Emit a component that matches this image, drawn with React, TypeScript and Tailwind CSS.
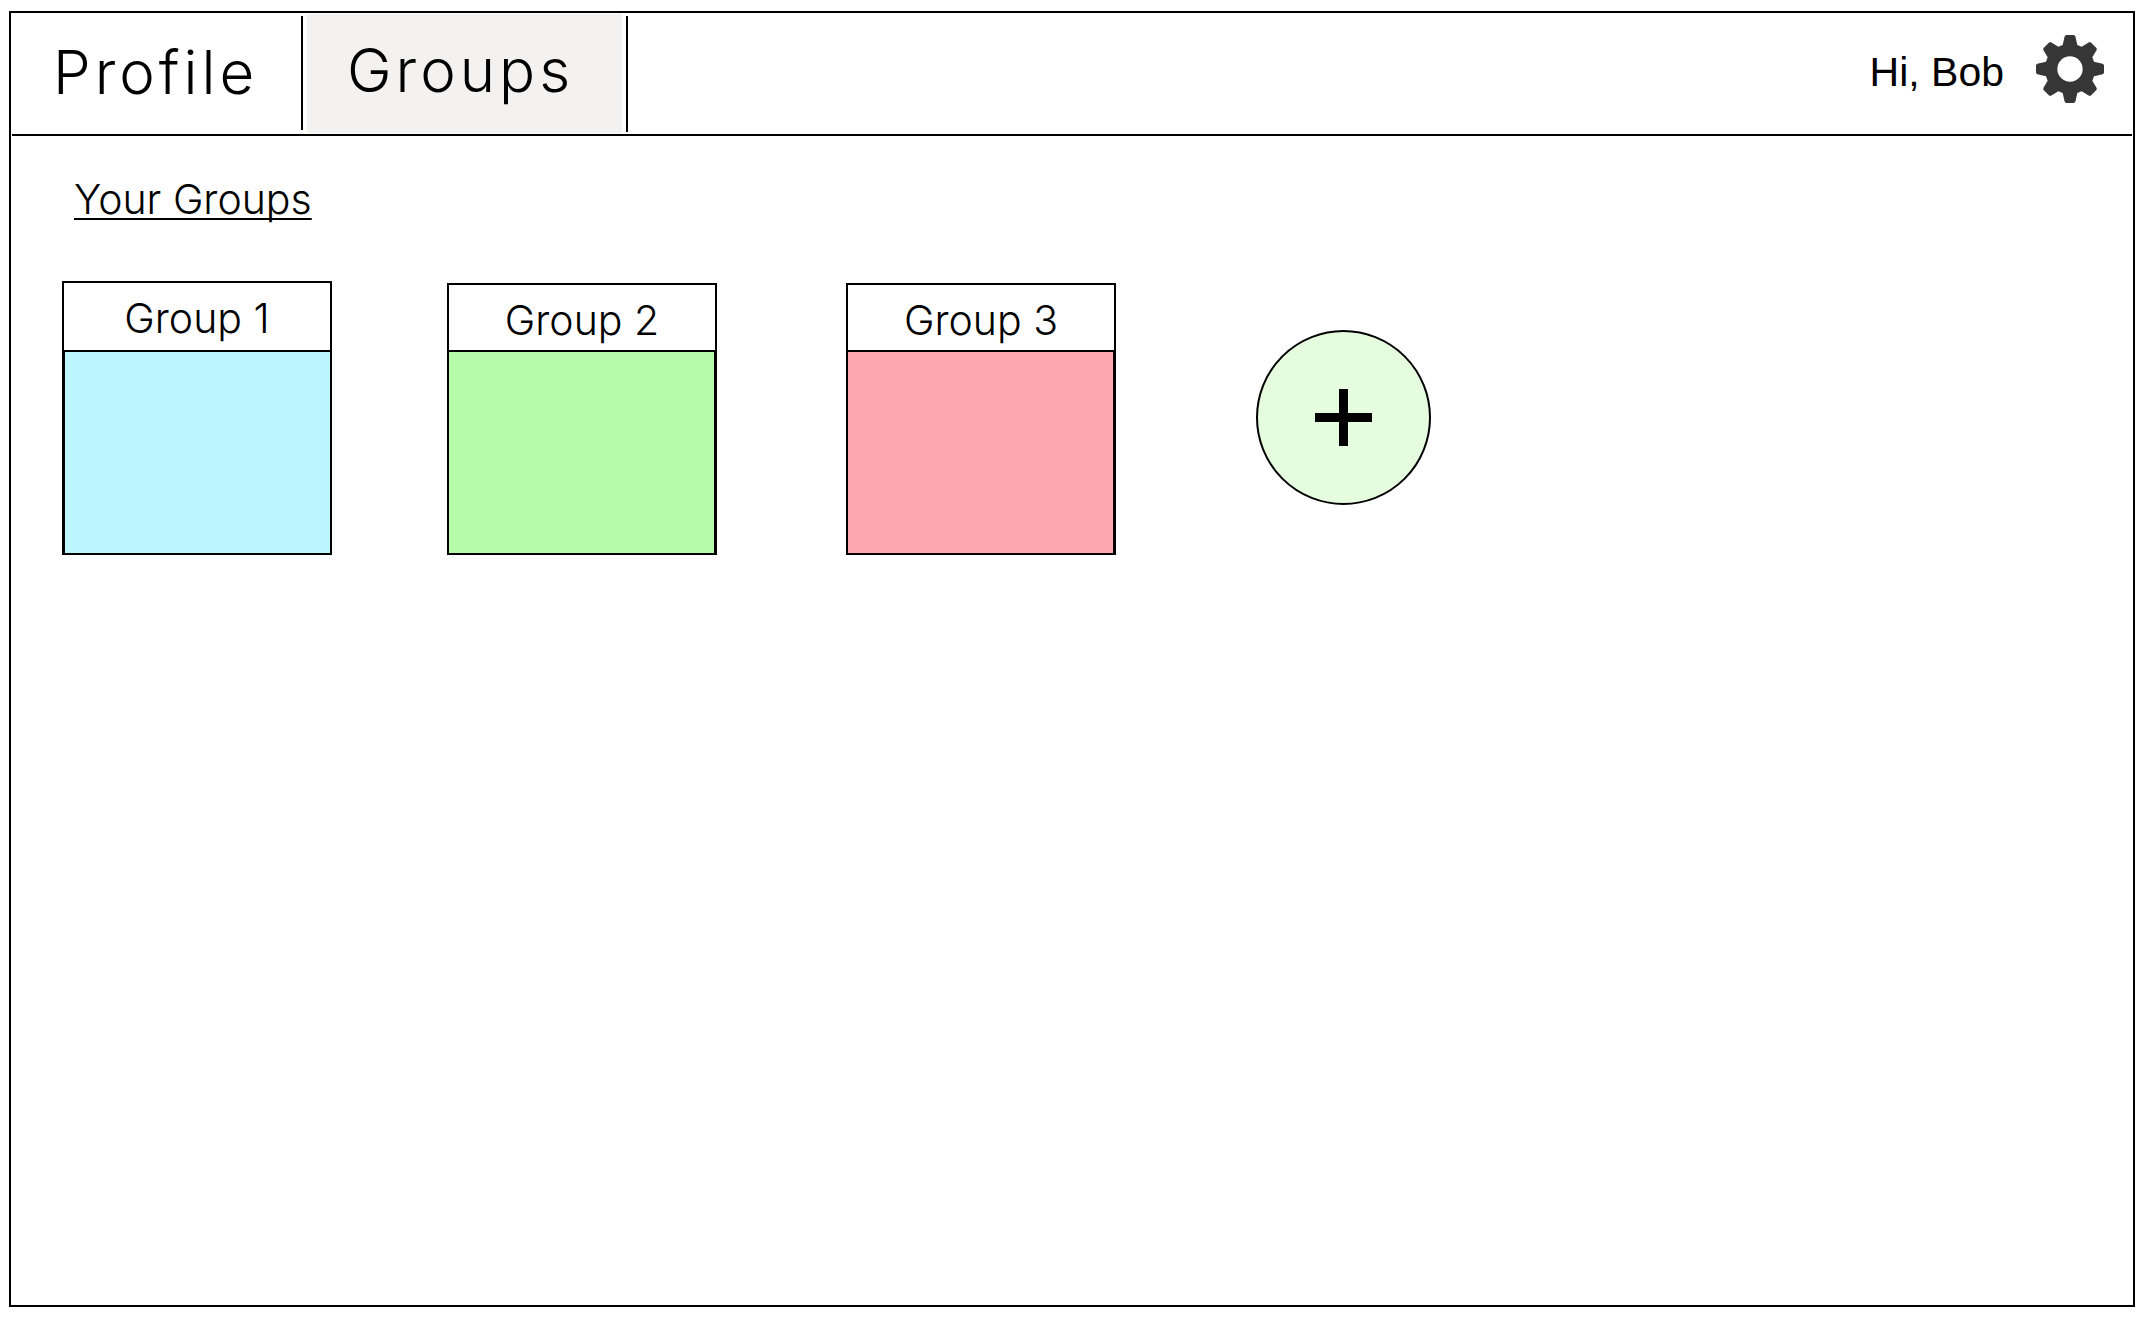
type Group = {
  name: string;
  card: string;
  title: string;
  body: string;
};

const groups: Group[] = [
  {
    name: 'Group 1',
    card: '',
    title: 'h-[67px]',
    body: 'border-l bg-[#bbf6fe]',
  },
  {
    name: 'Group 2',
    card: 'ml-[115px]',
    title: 'h-[65px]',
    body: 'border-r bg-[#b7fba8]',
  },
  {
    name: 'Group 3',
    card: 'ml-[129px]',
    title: 'h-[65px]',
    body: 'border-r bg-[#fda7b2]',
  },
];

function Gear() {
  return (
    <svg viewBox="-105 -105 210 210" className="size-[70px]" aria-hidden="true">
      <path
        fill="#363636"
        fillRule="evenodd"
        d="M12-102 16-98 22-72 35-67 57-80 62-80 80-62 80-57 67-35 72-22 98-16 102-12
           102 12 98 16 72 22 67 35 80 57 80 62 62 80 57 80 35 67 22 72 16 98 12 102
           -12 102-16 98-22 72-35 67-57 80-62 80-80 62-80 57-67 35-72 22-98 16-102 12
           -102-12-98-16-72-22-67-35-80-57-80-62-62-80-57-80-35-67-22-72-16-98-12-102Z
           M38 0A38 38 0 1 0-38 0A38 38 0 1 0 38 0Z"
      />
    </svg>
  );
}

function Plus() {
  return (
    <svg viewBox="0 0 57 57" className="size-[57px]" aria-hidden="true">
      <path d="M24 0h9v24h24v9H33v24h-9V33H0v-9h24Z" />
    </svg>
  );
}

export default function App() {
  return (
    <div className="flex min-h-screen bg-white pt-[11px] pr-[13px] pb-[13px] pl-[9px] font-['Inter',sans-serif] font-light text-black">
      <div className="flex flex-1 flex-col border-2 border-black">
        <header className="mx-px mt-px flex h-[122px] items-center justify-between border-b-2 border-black pr-[27px]">
          <nav className="flex self-start text-[60px] leading-[112px] tracking-[4px]">
            <a href="#profile" className="mt-[2px] h-[114px] w-[291px] border-r-2 border-black pl-[41px]">
              Profile
            </a>
            <a
              href="#groups"
              aria-current="page"
              className="ml-1 h-[119px] w-[315px] bg-[#f3f2f1] pl-10"
            >
              Groups
            </a>
            <div className="mt-[2px] ml-1 h-[116px] w-[2px] bg-black" />
          </nav>
          <div className="flex items-center gap-[31px] pb-[11px]">
            <span className="pt-[6px] font-['Liberation_Sans',sans-serif] text-[41px] leading-[46px] font-normal">
              Hi, Bob
            </span>
            <button type="button" aria-label="Settings">
              <Gear />
            </button>
          </div>
        </header>

        <main className="pl-[51px]">
          <h1 className="mt-[38px] pl-3 text-[41px] leading-[50px] underline decoration-2 underline-offset-4 [text-decoration-skip-ink:none]">
            Your Groups
          </h1>
          <div className="mt-[57px] flex items-end">
            {groups.map((group) => (
              <button
                key={group.name}
                type="button"
                className={`w-[270px] border-2 border-black ${group.card}`}
              >
                <div className={`pt-[10px] text-[41px] leading-[50px] ${group.title}`}>
                  {group.name}
                </div>
                <div className={`h-[203px] border-t-2 border-black ${group.body}`} />
              </button>
            ))}
            <button
              type="button"
              aria-label="Add group"
              className="mb-[50px] ml-[140px] flex size-[175px] items-center justify-center rounded-full border-2 border-black bg-[#e6fcdf]"
            >
              <Plus />
            </button>
          </div>
        </main>
      </div>
    </div>
  );
}
